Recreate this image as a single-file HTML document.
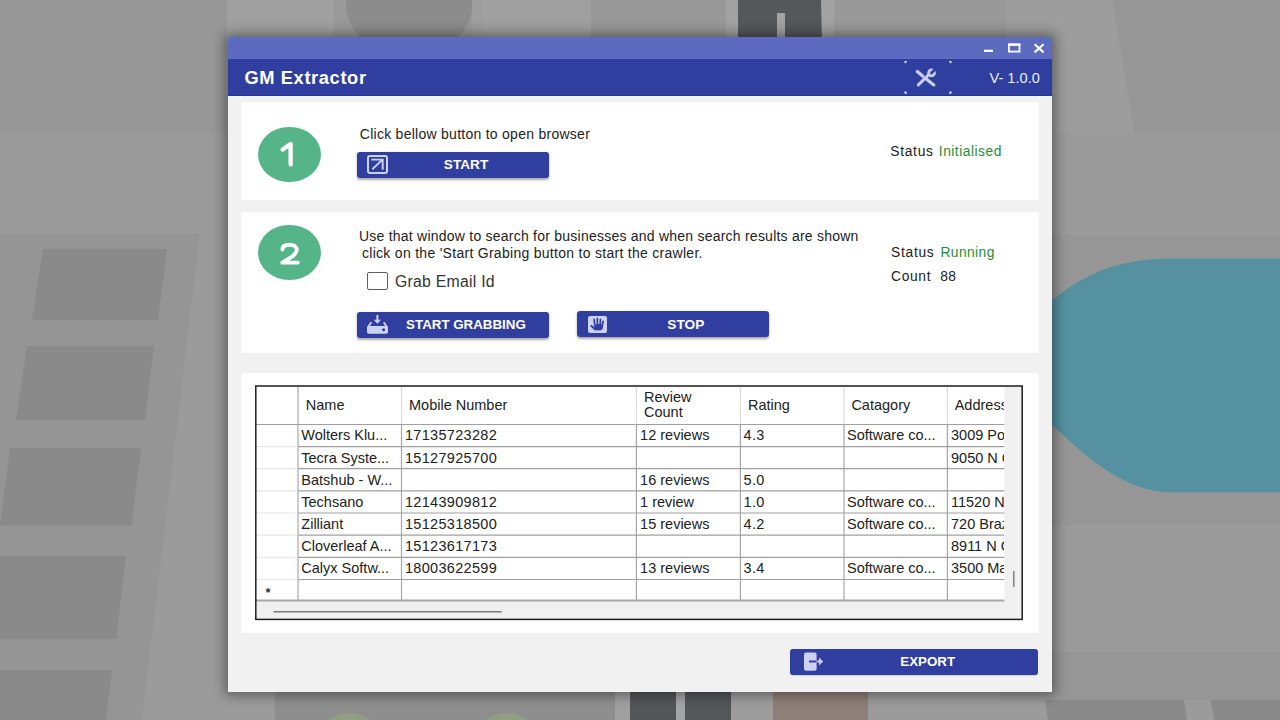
<!DOCTYPE html>
<html><head><meta charset="utf-8">
<style>
*{box-sizing:border-box;margin:0;padding:0}
html,body{width:1280px;height:720px;overflow:hidden}
body{position:relative;background:#9b9b9b;font-family:"Liberation Sans",sans-serif;color:#222}
.b{position:absolute}
.t{position:absolute;white-space:nowrap;line-height:1}
svg{position:absolute;left:0;top:0;overflow:visible}
</style></head><body>

<svg width="1280" height="720" viewBox="0 0 1280 720">
<rect x="0" y="0" width="1280" height="720" fill="#9b9b9b"/>
<!-- top band -->
<rect x="0" y="0" width="1280" height="132" fill="#979797"/>
<rect x="227" y="0" width="107" height="132" fill="#a0a0a0"/>
<rect x="334" y="0" width="149" height="132" fill="#9a9a9a"/>
<ellipse cx="409.3" cy="5.6" rx="63" ry="50" fill="#8c8c8c"/>
<rect x="472" y="0" width="11" height="132" fill="#9e9e9e"/>
<rect x="483" y="0" width="108" height="132" fill="#a0a0a0"/>
<rect x="591" y="0" width="135" height="132" fill="#989898"/>
<rect x="726" y="0" width="108" height="132" fill="#a2a2a2"/>
<polygon points="738,0 821,0 824,132 738,132" fill="#555759"/>
<rect x="777" y="13" width="8" height="119" fill="#a3a3a3"/>
<rect x="834" y="0" width="172" height="132" fill="#999999"/>
<polygon points="1006,0 1112,0 1134,132 1006,132" fill="#9d9d9d"/>
<!-- left ladder strip -->
<polygon points="0,233 200,233 142,720 0,720" fill="#959595"/>
<polygon points="43,249 167,249 158,320 32,320" fill="#8a8a8a"/>
<polygon points="27,346 154,346 145,420 16,420" fill="#8a8a8a"/>
<polygon points="10,448 141,448 131.5,525.6 0,525.6" fill="#8a8a8a"/>
<polygon points="-5,556 126,556 116,639 -15,639" fill="#8a8a8a"/>
<polygon points="-20,670 112,670 106,720 -25,720" fill="#8a8a8a"/>
<!-- right side -->
<rect x="1000" y="235" width="280" height="290" fill="#969696"/>
<rect x="1000" y="652" width="280" height="48" fill="#969696"/>
<path d="M1300 258.7 L1165 258.7 C1125 258.7 1085 272 1053 300 C1030 320 1030 410 1054 427 C1075 445 1115 488 1165 492.3 L1300 492.3 Z" fill="#5591a0"/>
<polygon points="1045,700 1184,700 1187,720 1048,720" fill="#8a8a8a"/>
<polygon points="1211,700 1290,700 1290,720 1214,720" fill="#8a8a8a"/>
<!-- bottom -->
<rect x="275" y="680" width="340" height="40" fill="#8e8e8e"/>
<ellipse cx="349" cy="738" rx="30" ry="25" fill="#8fa080"/>
<ellipse cx="507" cy="738" rx="30" ry="25" fill="#8fa080"/>
<rect x="615" y="680" width="15" height="40" fill="#a0a0a0"/>
<rect x="630" y="680" width="46" height="40" fill="#545556"/>
<rect x="676" y="680" width="9" height="40" fill="#a5a5a5"/>
<rect x="685" y="680" width="46" height="40" fill="#535757"/>
<rect x="731" y="680" width="42" height="40" fill="#9d9d9d"/>
<rect x="773" y="680" width="95" height="40" fill="#8e8078"/>
</svg>
<div class="b" style="left:228px;top:37px;width:824px;height:655px;background:#f1f1f1;box-shadow:0 0 12px 3px rgba(0,0,0,.42)"></div>
<div class="b" style="left:228px;top:37px;width:824px;height:22px;background:#5c6bc0"></div>
<div class="b" style="left:228px;top:59px;width:824px;height:37px;background:#303f9f;border-bottom:1px solid #28358c"></div>
<div class="b" style="left:228px;top:96px;width:824px;height:6px;background:linear-gradient(#edf5f5,#f0f0f0)"></div>
<svg width="1280" height="720">
<rect x="984" y="49.7" width="9" height="2.3" fill="#fff"/>
<rect x="1009" y="44.6" width="10.5" height="7" fill="none" stroke="#fff" stroke-width="1.8"/><rect x="1008.1" y="43.4" width="12.3" height="2.4" fill="#fff"/>
<path d="M1034.6 44.2 L1043.6 52.4 M1043.6 44.2 L1034.6 52.4" stroke="#fff" stroke-width="2.1"/>
</svg>
<div class="t" style="left:244.40px;top:68.51px;font-size:18.3px;font-weight:700;color:#fff;letter-spacing:0.62px">GM Extractor</div>
<div class="t" style="left:989.50px;top:70.84px;font-size:14.6px;font-weight:400;color:#eceef8;">V- 1.0.0</div>
<svg width="1280" height="720">
<g stroke="#dfe3fb" stroke-width="1.3" fill="none">
<path d="M905.2 63.3 V61.6 H907"/><path d="M949 61.6 H950.8 V63.3"/>
<path d="M905.2 91.3 V93 H907"/><path d="M949 93 H950.8 V91.3"/>
</g>
<g fill="#c9cdee" stroke="#c9cdee" stroke-linecap="round">
<path d="M917.3 71.5 L922.6 76" stroke-width="3.2"/>
<path d="M922 75.5 L926.5 79.3" stroke-width="1.6"/>
<path d="M926.3 79 L933.8 84.9" stroke-width="3.2"/>
<path d="M918.3 84.9 L928.8 74.6" stroke-width="3"/>
<circle cx="931.5" cy="72.9" r="4.3" stroke="none"/>
</g>
<path d="M931.4 73 L936.5 68" stroke="#303f9f" stroke-width="2.6" stroke-linecap="round"/>
</svg>
<div class="b" style="left:241px;top:102px;width:798px;height:98px;background:#fff;border-radius:2px"></div>
<div class="b" style="left:241px;top:212px;width:798px;height:141px;background:#fff;border-radius:2px"></div>
<div class="b" style="left:241px;top:373px;width:798px;height:260px;background:#fff;border-radius:2px"></div>
<div class="b" style="left:258px;top:126.8px;width:62.5px;height:55px;border-radius:50%;background:#55b589"></div>
<div class="b" style="left:258px;top:224.7px;width:62.5px;height:55px;border-radius:50%;background:#55b589"></div>
<svg width="1280" height="720"><path d="M282.6 149.6 L290.6 143.9 V164.6" stroke="#fff" stroke-width="4.3" stroke-linecap="round" stroke-linejoin="round" fill="none"/></svg>
<svg width="1280" height="720"><path d="M282.4 249.6 C282.4 246.2 285.3 244.7 289.6 244.7 C293.8 244.7 296.8 246.6 296.8 249.8 C296.8 252.4 295.2 254 292.4 256.4 L282.4 262.6 H297.8" stroke="#fff" stroke-width="3.9" stroke-linecap="round" stroke-linejoin="round" fill="none"/></svg>
<div class="t" style="left:359.80px;top:127.35px;font-size:14.0px;font-weight:400;color:#222;letter-spacing:0.265px">Click bellow button to open browser</div>
<div class="b" style="left:357px;top:151.8px;width:191.5px;height:26.2px;background:#303f9f;border-radius:3px;box-shadow:0 1.5px 2.5px rgba(0,0,0,.35)"></div>
<div class="t" style="left:443.80px;top:158.15px;font-size:13.65px;font-weight:700;color:#fff;">START</div>
<div class="t" style="left:890.30px;top:144.57px;font-size:13.8px;font-weight:400;color:#222;letter-spacing:0.7px">Status</div>
<div class="t" style="left:938.80px;top:144.57px;font-size:13.8px;font-weight:400;color:#27903a;letter-spacing:0.5px">Initialised</div>
<svg width="1280" height="720">
<rect x="368" y="156" width="19" height="17" rx="2" fill="none" stroke="#cdd1f4" stroke-width="2"/>
<path d="M372.3 169.2 L382.2 159.9 M371.3 159.6 H382.7 V169.8" stroke="#cdd1f4" stroke-width="1.9" fill="none"/>
</svg>
<div class="t" style="left:359.00px;top:229.15px;font-size:14.0px;font-weight:400;color:#222;letter-spacing:0.232px">Use that window to search for businesses and when search results are shown</div>
<div class="t" style="left:362.00px;top:245.55px;font-size:14.0px;font-weight:400;color:#222;letter-spacing:0.285px">click on the 'Start Grabing button to start the crawler.</div>
<div class="b" style="left:367.2px;top:272px;width:20.4px;height:17.5px;border:1.8px solid #5e5e5e;border-radius:2px;background:#fff"></div>
<div class="t" style="left:395.00px;top:273.63px;font-size:15.8px;font-weight:400;color:#333;letter-spacing:0.25px">Grab Email Id</div>
<div class="b" style="left:357px;top:311.5px;width:191.5px;height:26.2px;background:#303f9f;border-radius:3px;box-shadow:0 1.5px 2.5px rgba(0,0,0,.35)"></div>
<div class="b" style="left:577px;top:311.3px;width:191.7px;height:26.2px;background:#303f9f;border-radius:3px;box-shadow:0 1.5px 2.5px rgba(0,0,0,.35)"></div>
<div class="t" style="left:406.10px;top:318.31px;font-size:13.34px;font-weight:700;color:#fff;">START GRABBING</div>
<div class="t" style="left:667.30px;top:318.02px;font-size:13.68px;font-weight:700;color:#fff;">STOP</div>
<div class="t" style="left:891.10px;top:245.72px;font-size:13.8px;font-weight:400;color:#222;letter-spacing:0.7px">Status</div>
<div class="t" style="left:940.40px;top:245.72px;font-size:13.8px;font-weight:400;color:#27903a;letter-spacing:0.43px">Running</div>
<div class="t" style="left:891.10px;top:269.92px;font-size:13.8px;font-weight:400;color:#222;letter-spacing:0.65px">Count</div>
<div class="t" style="left:940.20px;top:269.82px;font-size:13.8px;font-weight:400;color:#222;letter-spacing:0.5px">88</div>
<svg width="1280" height="720">
<path d="M368 332.5 V327.3 L371.3 322.3 M387 332.5 V327.3 L383.8 322.3" stroke="#cdd1f4" stroke-width="1.9" fill="none"/>
<rect x="367" y="326" width="21" height="7.8" rx="2" fill="#cdd1f4"/>
<circle cx="383.6" cy="329.8" r="1.5" fill="#303f9f"/>
<path d="M377.4 315 V321" stroke="#cdd1f4" stroke-width="2"/>
<path d="M373.8 319.8 H381 L377.4 323.8 Z" fill="#cdd1f4"/>
<rect x="588" y="316" width="19" height="17" rx="2" fill="#cdd1f4"/>
<g stroke="#303f9f" stroke-linecap="round" fill="#303f9f">
<path d="M594.1 319.4 L594.8 325.5" stroke-width="1.7"/>
<path d="M597.4 318.5 L597.4 325" stroke-width="1.7"/>
<path d="M600.5 319.4 L600.2 325" stroke-width="1.7"/>
<path d="M603.1 321.3 L602.1 326.5" stroke-width="1.7"/>
<path d="M591.4 325.9 L595.4 329.6" stroke-width="2"/>
<ellipse cx="598.6" cy="327.2" rx="4.3" ry="3.3" stroke="none"/>
</g>
</svg>
<svg width="1280" height="720"><rect x="256" y="386" width="748.4" height="214.5" fill="#fff"/><rect x="256" y="600" width="766" height="19.5" fill="#f0f0f0"/><rect x="1004.4" y="386" width="17.6" height="233" fill="#f0f0f0"/><line x1="298" y1="424.5" x2="298" y2="600" stroke="#a8a8a8" stroke-width="1.2"/><line x1="298" y1="387" x2="298" y2="424.5" stroke="#a8a8a8" stroke-width="1.2"/><line x1="401.5" y1="424.5" x2="401.5" y2="600" stroke="#a8a8a8" stroke-width="1.2"/><line x1="401.5" y1="387" x2="401.5" y2="424.5" stroke="#dcdcdc" stroke-width="1.2"/><line x1="636.4" y1="424.5" x2="636.4" y2="600" stroke="#a8a8a8" stroke-width="1.2"/><line x1="636.4" y1="387" x2="636.4" y2="424.5" stroke="#dcdcdc" stroke-width="1.2"/><line x1="740.4" y1="424.5" x2="740.4" y2="600" stroke="#a8a8a8" stroke-width="1.2"/><line x1="740.4" y1="387" x2="740.4" y2="424.5" stroke="#dcdcdc" stroke-width="1.2"/><line x1="844" y1="424.5" x2="844" y2="600" stroke="#a8a8a8" stroke-width="1.2"/><line x1="844" y1="387" x2="844" y2="424.5" stroke="#dcdcdc" stroke-width="1.2"/><line x1="947.4" y1="424.5" x2="947.4" y2="600" stroke="#a8a8a8" stroke-width="1.2"/><line x1="947.4" y1="387" x2="947.4" y2="424.5" stroke="#dcdcdc" stroke-width="1.2"/><line x1="298" y1="424.5" x2="1004.4" y2="424.5" stroke="#a0a0a0" stroke-width="1.2"/><line x1="298" y1="446.6" x2="1004.4" y2="446.6" stroke="#a0a0a0" stroke-width="1.2"/><line x1="256" y1="446.6" x2="298" y2="446.6" stroke="#e6e6e6" stroke-width="1.2"/><line x1="298" y1="468.7" x2="1004.4" y2="468.7" stroke="#a0a0a0" stroke-width="1.2"/><line x1="256" y1="468.7" x2="298" y2="468.7" stroke="#e6e6e6" stroke-width="1.2"/><line x1="298" y1="490.9" x2="1004.4" y2="490.9" stroke="#a0a0a0" stroke-width="1.2"/><line x1="256" y1="490.9" x2="298" y2="490.9" stroke="#e6e6e6" stroke-width="1.2"/><line x1="298" y1="513.0" x2="1004.4" y2="513.0" stroke="#a0a0a0" stroke-width="1.2"/><line x1="256" y1="513.0" x2="298" y2="513.0" stroke="#e6e6e6" stroke-width="1.2"/><line x1="298" y1="535.2" x2="1004.4" y2="535.2" stroke="#a0a0a0" stroke-width="1.2"/><line x1="256" y1="535.2" x2="298" y2="535.2" stroke="#e6e6e6" stroke-width="1.2"/><line x1="298" y1="557.3" x2="1004.4" y2="557.3" stroke="#a0a0a0" stroke-width="1.2"/><line x1="256" y1="557.3" x2="298" y2="557.3" stroke="#e6e6e6" stroke-width="1.2"/><line x1="298" y1="579.5" x2="1004.4" y2="579.5" stroke="#a0a0a0" stroke-width="1.2"/><line x1="256" y1="579.5" x2="298" y2="579.5" stroke="#e6e6e6" stroke-width="1.2"/><line x1="256" y1="424.5" x2="298" y2="424.5" stroke="#a0a0a0" stroke-width="1.2"/><line x1="256" y1="600.5" x2="1004.4" y2="600.5" stroke="#a6a6a6" stroke-width="2.2"/><line x1="273.5" y1="611.7" x2="501.7" y2="611.7" stroke="#7a7a7a" stroke-width="1.6"/><line x1="1013.8" y1="571" x2="1013.8" y2="587" stroke="#888" stroke-width="1.6"/><rect x="255.8" y="386" width="766.4" height="233.4" fill="none" stroke="#1c1c1c" stroke-width="1.5"/></svg>
<div class="b" style="left:256px;top:386px;width:748px;height:233px;overflow:hidden">
<div class="t" style="left:49.80px;top:12.43px;font-size:14.5px;color:#222;">Name</div>
<div class="t" style="left:153.00px;top:12.43px;font-size:14.5px;color:#222;">Mobile Number</div>
<div class="t" style="left:388.00px;top:3.93px;font-size:14.5px;color:#222;">Review</div>
<div class="t" style="left:388.00px;top:19.43px;font-size:14.5px;color:#222;">Count</div>
<div class="t" style="left:492.00px;top:12.43px;font-size:14.5px;color:#222;">Rating</div>
<div class="t" style="left:595.40px;top:12.43px;font-size:14.5px;color:#222;">Catagory</div>
<div class="t" style="left:698.70px;top:12.43px;font-size:14.5px;color:#222;">Address</div>
<div class="t" style="left:45.30px;top:42.43px;font-size:14.5px;color:#222;">Wolters Klu...</div>
<div class="t" style="left:149.00px;top:42.43px;font-size:14.5px;color:#222;letter-spacing:0.3px;">17135723282</div>
<div class="t" style="left:384.10px;top:42.43px;font-size:14.5px;color:#222;">12 reviews</div>
<div class="t" style="left:487.60px;top:42.43px;font-size:14.5px;color:#222;letter-spacing:0.3px;">4.3</div>
<div class="t" style="left:591.00px;top:42.43px;font-size:14.5px;color:#222;">Software co...</div>
<div class="t" style="left:695.00px;top:42.43px;font-size:14.5px;color:#222;">3009 Post Oak</div>
<div class="t" style="left:45.30px;top:64.58px;font-size:14.5px;color:#222;">Tecra Syste...</div>
<div class="t" style="left:149.00px;top:64.58px;font-size:14.5px;color:#222;letter-spacing:0.3px;">15127925700</div>
<div class="t" style="left:695.00px;top:64.58px;font-size:14.5px;color:#222;">9050 N Capital</div>
<div class="t" style="left:45.30px;top:86.73px;font-size:14.5px;color:#222;">Batshub - W...</div>
<div class="t" style="left:384.10px;top:86.73px;font-size:14.5px;color:#222;">16 reviews</div>
<div class="t" style="left:487.60px;top:86.73px;font-size:14.5px;color:#222;letter-spacing:0.3px;">5.0</div>
<div class="t" style="left:45.30px;top:108.88px;font-size:14.5px;color:#222;">Techsano</div>
<div class="t" style="left:149.00px;top:108.88px;font-size:14.5px;color:#222;letter-spacing:0.3px;">12143909812</div>
<div class="t" style="left:384.10px;top:108.88px;font-size:14.5px;color:#222;">1 review</div>
<div class="t" style="left:487.60px;top:108.88px;font-size:14.5px;color:#222;letter-spacing:0.3px;">1.0</div>
<div class="t" style="left:591.00px;top:108.88px;font-size:14.5px;color:#222;">Software co...</div>
<div class="t" style="left:695.00px;top:108.88px;font-size:14.5px;color:#222;">11520 N Central</div>
<div class="t" style="left:45.30px;top:131.03px;font-size:14.5px;color:#222;">Zilliant</div>
<div class="t" style="left:149.00px;top:131.03px;font-size:14.5px;color:#222;letter-spacing:0.3px;">15125318500</div>
<div class="t" style="left:384.10px;top:131.03px;font-size:14.5px;color:#222;">15 reviews</div>
<div class="t" style="left:487.60px;top:131.03px;font-size:14.5px;color:#222;letter-spacing:0.3px;">4.2</div>
<div class="t" style="left:591.00px;top:131.03px;font-size:14.5px;color:#222;">Software co...</div>
<div class="t" style="left:695.00px;top:131.03px;font-size:14.5px;color:#222;">720 Brazos St</div>
<div class="t" style="left:45.30px;top:153.18px;font-size:14.5px;color:#222;">Cloverleaf A...</div>
<div class="t" style="left:149.00px;top:153.18px;font-size:14.5px;color:#222;letter-spacing:0.3px;">15123617173</div>
<div class="t" style="left:695.00px;top:153.18px;font-size:14.5px;color:#222;">8911 N Capital</div>
<div class="t" style="left:45.30px;top:175.33px;font-size:14.5px;color:#222;">Calyx Softw...</div>
<div class="t" style="left:149.00px;top:175.33px;font-size:14.5px;color:#222;letter-spacing:0.3px;">18003622599</div>
<div class="t" style="left:384.10px;top:175.33px;font-size:14.5px;color:#222;">13 reviews</div>
<div class="t" style="left:487.60px;top:175.33px;font-size:14.5px;color:#222;letter-spacing:0.3px;">3.4</div>
<div class="t" style="left:591.00px;top:175.33px;font-size:14.5px;color:#222;">Software co...</div>
<div class="t" style="left:695.00px;top:175.33px;font-size:14.5px;color:#222;">3500 Maple Ave</div>
</div>
<div class="t" style="left:265.50px;top:586.00px;font-size:13px;font-weight:700;color:#333;">*</div>
<div class="b" style="left:789.6px;top:648.8px;width:248.6px;height:26.2px;background:#303f9f;border-radius:3px;box-shadow:0 1px 1px rgba(0,0,0,.15)"></div>
<div class="t" style="left:900.30px;top:654.72px;font-size:13.33px;font-weight:700;color:#fff;">EXPORT</div>
<svg width="1280" height="720">
<rect x="804" y="652.4" width="12.6" height="18.3" rx="2" fill="#cdd1f4"/>
<path d="M809 661.5 H817" stroke="#303f9f" stroke-width="2"/>
<path d="M816.6 661.5 H820" stroke="#cdd1f4" stroke-width="2"/>
<path d="M819 657.6 L823.2 661.5 L819 665.4 Z" fill="#cdd1f4"/>
</svg>
</body></html>
